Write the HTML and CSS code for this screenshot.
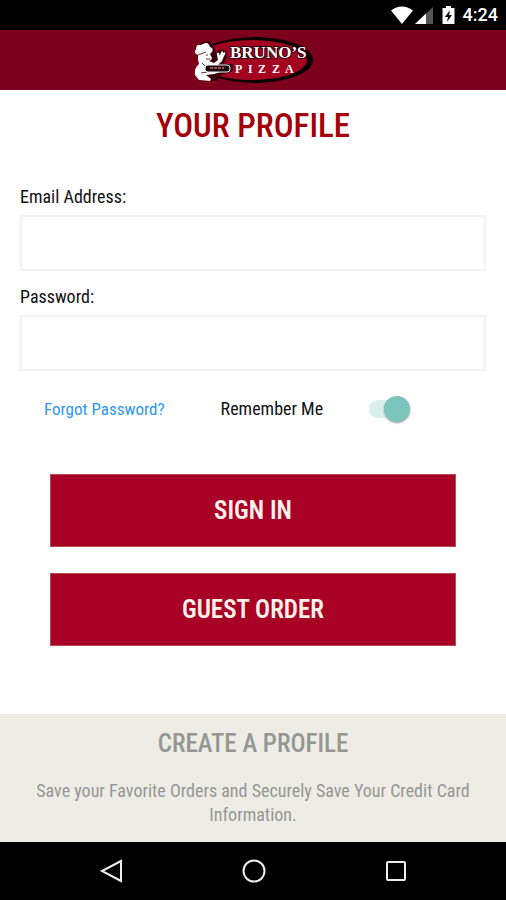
FILE: index.html
```html
<!DOCTYPE html>
<html lang="en">
<head>
  <meta charset="utf-8">
  <meta name="viewport" content="width=device-width, initial-scale=1">
  <title>Your Profile</title>
  <link rel="stylesheet" href="styles.css">
</head>
<body>
  <div class="status-bar">
    <svg class="status-icons" width="66" height="20" viewBox="0 0 66 20" aria-hidden="true">
      <path fill="#fff" d="M0 5.500Q11 -2.500 22 5.500L11 19Z"/>
      <path fill="#555" d="M42 2v17H24Z"/>
      <path fill="#fff" d="M35 8.500V19H24Z"/>
      <path fill="#fff" d="M55 1h5v2h3.500v16h-12V3H55Z"/>
      <path fill="#000" d="M59 5l-5 7h3l-1 5 5-7h-3Z"/>
    </svg>
    <span class="clock">4:24</span>
  </div>

  <header class="app-header">
    <svg class="logo" width="122" height="50" viewBox="0 0 122 50" role="img" aria-label="Bruno's Pizza">
      <ellipse cx="63" cy="25" rx="58" ry="23" fill="#0b0003"/>
      <ellipse cx="60" cy="25" rx="55" ry="20" fill="#a4001f"/>
      <path fill="#3a000e" d="M4 18q-3-8 5-10 9-5 13 3l2 7 4-4 6 2 1 6-3 7h9v7l-14 5-2 5H7l-2-8 3-9Z"/>
      <path fill="#fff" d="M6 20Q1 18 4 14 4 9 9 10q7-5 9 2 4 1 2 5l-2 2 2 4q-1 3-3 3l5 2 4-3-1-5q-1-3 2-2l1 3 1-4q2-2 2 1l2-1q1 2-1 4l-2 5-4 4-7 1 15 1-2 4-10 3-8 1 5 4-1 2-11-1-4-5q-1-7 4-11l-1-5Z"/>
      <path fill="none" stroke="#5a3036" d="M6 20l8-3M14 20h2M14 24h4M10 28l3 3M9 38l6-1"/>
      <rect x="13" y="30" width="25" height="7" rx="3" fill="#170a0d" stroke="#eee"/>
      <path stroke="#a64b55" stroke-width="2" stroke-dasharray="3 1" d="M18 33h14"/>
      <text class="logo-name" x="38" y="23">BRUNO’S</text>
      <text class="logo-sub" x="43 56 66 80 93" y="38">PIZZA</text>
    </svg>
  </header>

  <main class="profile">
    <h1 class="title">YOUR PROFILE</h1>
    <form class="login">
      <div class="field">
        <label for="email">Email Address:</label>
        <input id="email" type="email">
      </div>
      <div class="field">
        <label for="password">Password:</label>
        <input id="password" type="password">
      </div>
      <div class="options">
        <a class="forgot" href="#">Forgot Password?</a>
        <label class="remember" for="remember">Remember Me</label>
        <input class="switch" id="remember" type="checkbox" role="switch" checked>
      </div>
      <div class="actions">
        <button type="submit">SIGN IN</button>
        <button type="button">GUEST ORDER</button>
      </div>
    </form>
  </main>

  <section class="create">
    <h2>CREATE A PROFILE</h2>
    <p>Save your Favorite Orders and Securely Save Your Credit Card Information.</p>
  </section>

  <nav class="system-nav">
    <button type="button" aria-label="Back">
      <svg width="26" height="26" viewBox="0 0 26 26"><path d="M23 3v20L4 13Z"/></svg>
    </button>
    <button type="button" aria-label="Home">
      <svg width="26" height="26" viewBox="0 0 26 26"><circle cx="14" cy="13" r="10.500"/></svg>
    </button>
    <button type="button" aria-label="Recent apps">
      <svg width="26" height="26" viewBox="0 0 26 26"><rect x="5" y="4" width="18" height="18" rx="1"/></svg>
    </button>
  </nav>
</body>
</html>
```

FILE: styles.css
```css
* { box-sizing: border-box; }

body {
  margin: 0;
  min-height: 100vh;
  display: flex;
  flex-direction: column;
  background: #fff;
  color: #111;
  font-family: "Roboto Condensed", "Liberation Sans Narrow", Roboto, sans-serif;
  font-size: 18px;
  line-height: 24px;
}

.status-bar {
  height: 30px;
  padding: 0 8px;
  display: flex;
  align-items: center;
  justify-content: flex-end;
  gap: 6px;
  background: #000;
  color: #fff;
}

.clock {
  font-family: Roboto, sans-serif;
  font-size: 18px;
  font-weight: 500;
}

.app-header {
  height: 60px;
  display: flex;
  align-items: center;
  justify-content: center;
  background: #7c001c;
}

.logo-name {
  font-family: "Liberation Serif", serif;
  font-size: 17px;
  font-weight: 700;
  fill: #fff;
  stroke: #2a0009;
  stroke-width: 2px;
  paint-order: stroke;
}

.logo-sub {
  font-family: "Liberation Serif", serif;
  font-size: 12px;
  font-weight: 700;
  fill: #fff;
}

.profile {
  flex: 1;
  padding: 16px 20px 24px;
}

.title {
  margin: 0 0 39px;
  color: #a30008;
  font-size: 33px;
  font-weight: 500;
  line-height: 40px;
  text-align: center;
}

.field {
  display: flex;
  flex-direction: column;
  gap: 6px;
  margin-bottom: 14px;
}

.field input {
  width: 100%;
  height: 56px;
  padding: 0 12px;
  border: 2px solid #f3f3f3;
  background: #fff;
  font: inherit;
}

.options {
  display: flex;
  align-items: center;
  margin: 25px 0 52px;
  padding: 0 24px;
}

.remember { margin: 0 46px 0 56px; }

.forgot {
  color: #2e96f3;
  font-size: 17px;
  text-decoration: none;
}

.switch {
  appearance: none;
  width: 41px;
  height: 26px;
  margin: 0;
  display: grid;
  align-items: center;
}

.switch::before,
.switch::after {
  content: "";
  grid-area: 1 / 1;
}

.switch::before {
  width: 34px;
  height: 18px;
  border-radius: 9px;
  background: #d9f0ed;
}

.switch::after {
  justify-self: end;
  width: 26px;
  height: 26px;
  border-radius: 50%;
  background: #7ac5bc;
  box-shadow: 0 1px 2px #999;
}

.actions {
  display: flex;
  flex-direction: column;
  gap: 26px;
  padding: 0 30px;
}

.actions button {
  height: 73px;
  border: 1px solid #b64d4d;
  background: #a90025;
  color: #fff0e8;
  font: inherit;
  font-size: 25px;
  font-weight: 600;
}

.create {
  padding: 14px 32px 15px;
  background: #edede6;
  color: #969694;
  text-align: center;
}

.create h2 {
  margin: 0 0 19px;
  font-size: 25px;
  font-weight: 500;
  line-height: 32px;
}

.create p {
  margin: 0;
  font-size: 18px;
}

.system-nav {
  height: 58px;
  padding: 0 40px;
  display: flex;
  align-items: center;
  background: #000;
}

.system-nav button {
  flex: 1;
  padding: 0;
  border: 0;
  background: none;
}

.system-nav svg {
  display: block;
  margin: 0 auto;
  fill: none;
  stroke: #eee;
  stroke-width: 2;
}
```
